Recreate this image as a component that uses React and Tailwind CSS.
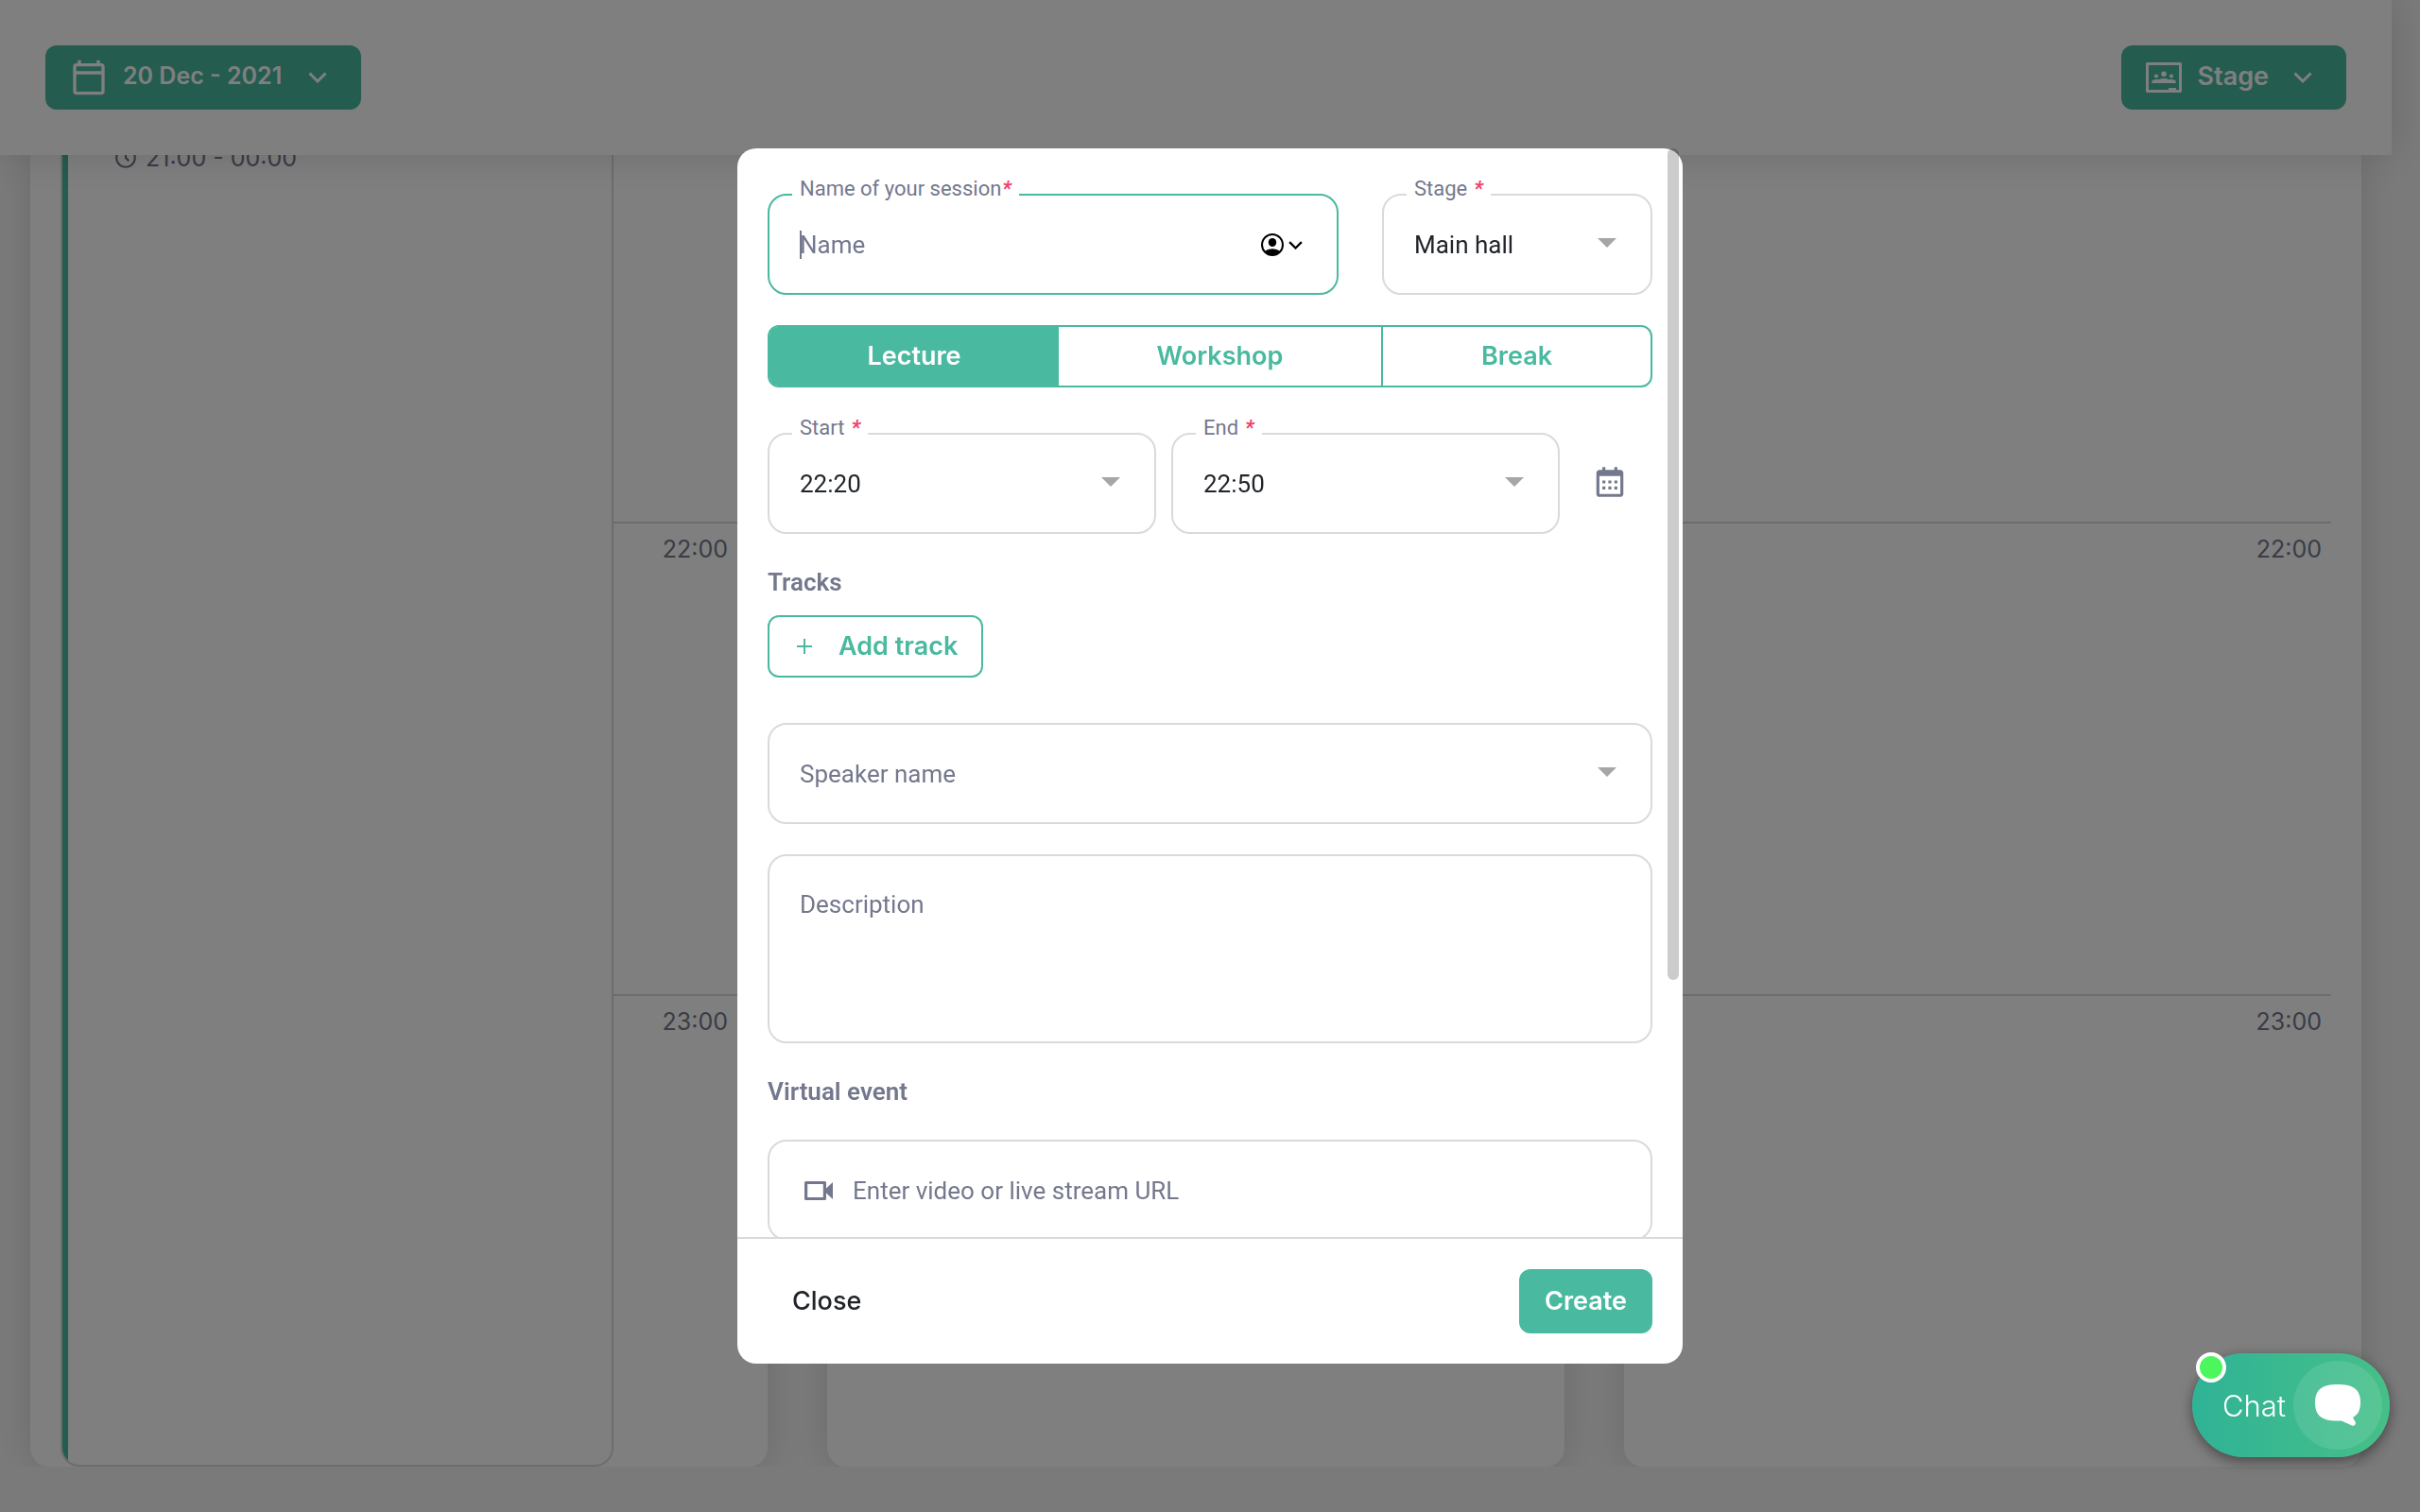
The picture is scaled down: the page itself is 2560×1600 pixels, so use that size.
import React from "react";
import { MdOutlineCalendarToday } from "react-icons/md";
import { BiCalendar, BiTimeFive } from "react-icons/bi";

const UI = "font-['Inter',sans-serif]";

function Chevron({ className }) {
  return (
    <svg viewBox="0 0 20 12" className={className} fill="none" stroke="currentColor" aria-hidden="true">
      <path d="M1.5 1.5 10 10 18.5 1.5" strokeWidth="3" />
    </svg>
  );
}

function StageIcon() {
  return (
    <svg viewBox="0 0 38 32" className="w-[38px] h-8" fill="currentColor" aria-hidden="true">
      <path fillRule="evenodd" d="M1.5 0h35A1.5 1.5 0 0 1 38 1.5v29a1.5 1.5 0 0 1-1.5 1.5h-35A1.5 1.5 0 0 1 0 30.5v-29A1.5 1.5 0 0 1 1.5 0zM3 3v26h21v-2h8v2h3V3z" />
      <circle cx="19" cy="12.2" r="2.8" />
      <circle cx="11" cy="14.5" r="2.1" />
      <circle cx="27" cy="14.5" r="2.1" />
      <path d="M6.200 22v-1.200c0-1.800 2.300-2.800 4.800-2.800 1 0 1.900.1 2.700.3 1.300-.9 3.300-1.400 5.300-1.400s4 .5 5.300 1.400c.8-.2 1.700-.3 2.700-.3 2.500 0 4.800 1 4.800 2.800V22z" />
    </svg>
  );
}

function VideoIcon() {
  return (
    <svg viewBox="0 0 30 20" className="w-[30px] h-5" fill="currentColor" aria-hidden="true">
      <path fillRule="evenodd" d="M1.5 0h20A1.5 1.5 0 0 1 23 1.5V7.5L30 1v18l-7-6.500v6a1.5 1.5 0 0 1-1.5 1.5h-20A1.5 1.5 0 0 1 0 18.500v-17A1.5 1.5 0 0 1 1.5 0zM3.200 3v14h16.600V3z" />
    </svg>
  );
}

function AccountIcon() {
  return (
    <svg viewBox="0 0 24 24" className="size-6" aria-hidden="true">
      <defs>
        <clipPath id="account-disc">
          <circle cx="12" cy="12" r="11" />
        </clipPath>
      </defs>
      <circle cx="12" cy="12" r="11" fill="none" stroke="currentColor" strokeWidth="2" />
      <ellipse cx="12" cy="9.5" rx="4.200" ry="4.600" fill="currentColor" />
      <ellipse cx="12" cy="21.500" rx="9" ry="5.200" fill="currentColor" clipPath="url(#account-disc)" />
    </svg>
  );
}

function FieldLabel({ id, children, tight }) {
  return (
    <label htmlFor={id} className="absolute left-[26px] -top-[19px] px-2 bg-white text-[22px] leading-7 text-[#74788d] whitespace-nowrap">
      {children}
      <em className={tight ? "ml-px font-bold text-[#f1416c]" : "ml-[7px] font-bold text-[#f1416c]"}>*</em>
    </label>
  );
}

const BOX = "w-full rounded-[20px] border-2 bg-white px-8 text-[26px] outline-none";

function SelectField({ id, label, value, placeholder }) {
  return (
    <div className="relative min-w-0 flex-1">
      {label && <FieldLabel id={id}>{label}</FieldLabel>}
      <select
        id={id}
        aria-label={label ? undefined : placeholder}
        className={`${BOX} block h-[107px] appearance-none border-[#dadada] pt-0.5 ${value ? "text-[#212529]" : "text-[#74788d]"}`}
      >
        <option>{value || placeholder}</option>
      </select>
      <svg viewBox="0 0 20 10" className="pointer-events-none absolute right-[38px] top-[47px] h-2.5 w-5" fill="#a6a6a6" aria-hidden="true">
        <path d="M0 0h20L10 10z" />
      </svg>
    </div>
  );
}

function HourSlots() {
  return (
    <div className="flex min-w-0 flex-1 flex-col text-right text-[25px] leading-[38px] text-[#74788d]">
      <div className="h-[388px] shrink-0" />
      <div className="h-[500px] shrink-0 border-t-2 border-[#dadada] pr-2.5 pt-2">22:00</div>
      <div className="flex-1 border-t-2 border-[#dadada] pr-2.5 pt-2">23:00</div>
    </div>
  );
}

function Column({ children }) {
  return (
    <section className="flex min-w-0 flex-1 rounded-b-[20px] bg-white px-8 shadow-[0_0_40px_rgba(0,0,0,0.13)]">
      {children}
      <HourSlots />
    </section>
  );
}

function Schedule() {
  return (
    <div className={`${UI} flex h-screen flex-col bg-[#f5f5f5]`}>
      <header className="relative z-10 mr-[30px] flex h-[164px] shrink-0 items-start justify-between bg-white px-12 pt-12 shadow-[0_0_40px_rgba(0,0,0,0.15)]">
        <button className="flex h-[68px] items-center rounded-xl bg-[#49b9a0] pl-[26px] pr-9 text-[25px] font-semibold text-white">
          <MdOutlineCalendarToday className="size-10" />
          <span className="ml-4 pb-0.5">20 Dec - 2021</span>
          <Chevron className="ml-7 h-3 w-5" />
        </button>
        <button className="flex h-[68px] items-center rounded-xl bg-[#49b9a0] pl-[26px] pr-9 text-[27px] font-semibold text-white">
          <StageIcon />
          <span className="ml-4 pb-0.5">Stage</span>
          <Chevron className="ml-[26px] h-3 w-5" />
        </button>
      </header>
      <main className="mb-12 flex min-h-0 flex-1 gap-[63px] overflow-hidden pl-8 pr-[62px]">
        <Column>
          <article className="flex w-[585px] shrink-0 overflow-hidden rounded-b-[20px] border-2 border-t-0 border-[#dadada]">
            <div className="w-1.5 bg-[#49b9a0]" />
            <p className="-mt-[15px] flex h-9 items-center gap-2 pl-12 text-[25px] leading-9 text-[#74788d]">
              <BiTimeFive className="size-[26px]" />
              21:00 - 00:00
            </p>
          </article>
        </Column>
        <Column />
        <Column />
      </main>
    </div>
  );
}

function SessionDialog() {
  return (
    <div className="fixed inset-0 z-20 flex justify-center bg-black/50 py-[157px] font-['Roboto',sans-serif]">
      <form role="dialog" aria-label="Session" className="relative flex h-full w-[1000px] flex-col rounded-[20px] bg-white">
        <div className="flex min-h-0 flex-1 flex-col overflow-y-auto px-8 pt-12 [scrollbar-width:none] *:shrink-0">
          <div className="flex gap-[46px]">
            <div className="relative w-[604px]">
              <FieldLabel id="name" tight>Name of your session</FieldLabel>
              <input id="name" placeholder="Name" className={`${BOX} block h-[107px] border-[#49b9a0] placeholder:text-[#74788d]`} />
              <span className="absolute left-[34px] top-[39px] h-[30px] w-0.5 bg-[#74788d]" />
              <button type="button" aria-label="Fill from contacts" className="absolute right-[38px] top-[42px] flex items-center gap-[5px] text-black">
                <AccountIcon />
                <Chevron className="h-[9px] w-[15px]" />
              </button>
            </div>
            <SelectField id="stage" label="Stage" value="Main hall" />
          </div>

          <div className={`${UI} mt-8 flex h-[66px] rounded-xl border-2 border-[#49b9a0] text-[27px] font-semibold text-[#49b9a0]`}>
            <button type="button" className="w-[306px] rounded-l-[9px] bg-[#49b9a0] text-white">Lecture</button>
            <button type="button" className="flex-1">Workshop</button>
            <button type="button" className="w-[285px] border-l-2 border-[#49b9a0]">Break</button>
          </div>

          <div className="mt-12 flex gap-4">
            <SelectField id="start" label="Start" value="22:20" />
            <SelectField id="end" label="End" value="22:50" />
            <button type="button" aria-label="Pick a date" className="flex w-[82px] items-center pb-1 pl-[18px] text-[#74788d]">
              <BiCalendar className="size-[38px]" />
            </button>
          </div>

          <h3 className="mt-[31px] text-[26px] font-semibold leading-10 text-[#74788d]">Tracks</h3>
          <button type="button" className={`${UI} mt-[15px] flex h-[66px] w-[228px] items-center rounded-xl border-2 border-[#49b9a0] pl-[29px] text-[27px] font-semibold text-[#49b9a0]`}>
            <svg viewBox="0 0 16 16" className="mr-7 size-4" stroke="currentColor" strokeWidth="2" aria-hidden="true">
              <path d="M8 0v16M0 8h16" />
            </svg>
            Add track
          </button>

          <div className="mt-12 flex">
            <SelectField id="speaker" placeholder="Speaker name" />
          </div>
          <textarea aria-label="Description" placeholder="Description" className={`${BOX} mt-8 block h-[200px] resize-none border-[#dadada] pt-[31px] leading-10 placeholder:text-[#74788d]`} />

          <h3 className="mt-[31px] text-[26px] font-semibold leading-10 text-[#74788d]">Virtual event</h3>
          <label className="mt-[31px] flex h-[107px] items-center gap-[21px] rounded-[20px] border-2 border-[#dadada] pl-[37px] text-[#74788d]">
            <VideoIcon />
            <input aria-label="Video URL" placeholder="Enter video or live stream URL" className="min-w-0 flex-1 pt-0.5 text-[26px] outline-none placeholder:text-[#74788d]" />
          </label>
        </div>
        <footer className={`${UI} flex shrink-0 items-center justify-between border-t-2 border-[#dadada] p-8 text-[27px]`}>
          <button type="button" className="h-[68px] px-[26px] font-medium text-[#212529]">Close</button>
          <button type="submit" className="h-[68px] w-[141px] rounded-xl bg-[#49b9a0] font-semibold text-white">Create</button>
        </footer>
        <div className="absolute right-1 top-0 h-[880px] w-3 rounded-full bg-black/20" />
      </form>
    </div>
  );
}

function ChatButton() {
  return (
    <button className="fixed bottom-[58px] right-8 z-30 flex h-[110px] w-[209px] items-center justify-between rounded-full bg-linear-to-r from-[#2fb396] to-[#46bf88] pl-8 pr-2 font-['Inter',sans-serif] text-[31px] font-light text-white shadow-[0_4px_14px_rgba(0,0,0,0.45)]">
      <span className="pt-0.5">Chat</span>
      <span className="flex size-[94px] items-center justify-center rounded-full bg-white/10">
        <svg viewBox="0 0 48 44" className="h-11 w-12" fill="currentColor" aria-hidden="true">
          <path d="M24 0C40 0 48 5 48 19c0 8-2.500 13-8 16l2.500 4.500c1.200 2.500-1 5-3.500 4L28 38.500C8 39.500 0 34 0 19 0 5 8 0 24 0z" />
        </svg>
      </span>
      <span className="absolute -top-px left-1 size-8 rounded-full border-4 border-white bg-[#4cf75d]" />
    </button>
  );
}

export default function App() {
  return (
    <>
      <Schedule />
      <SessionDialog />
      <ChatButton />
    </>
  );
}
